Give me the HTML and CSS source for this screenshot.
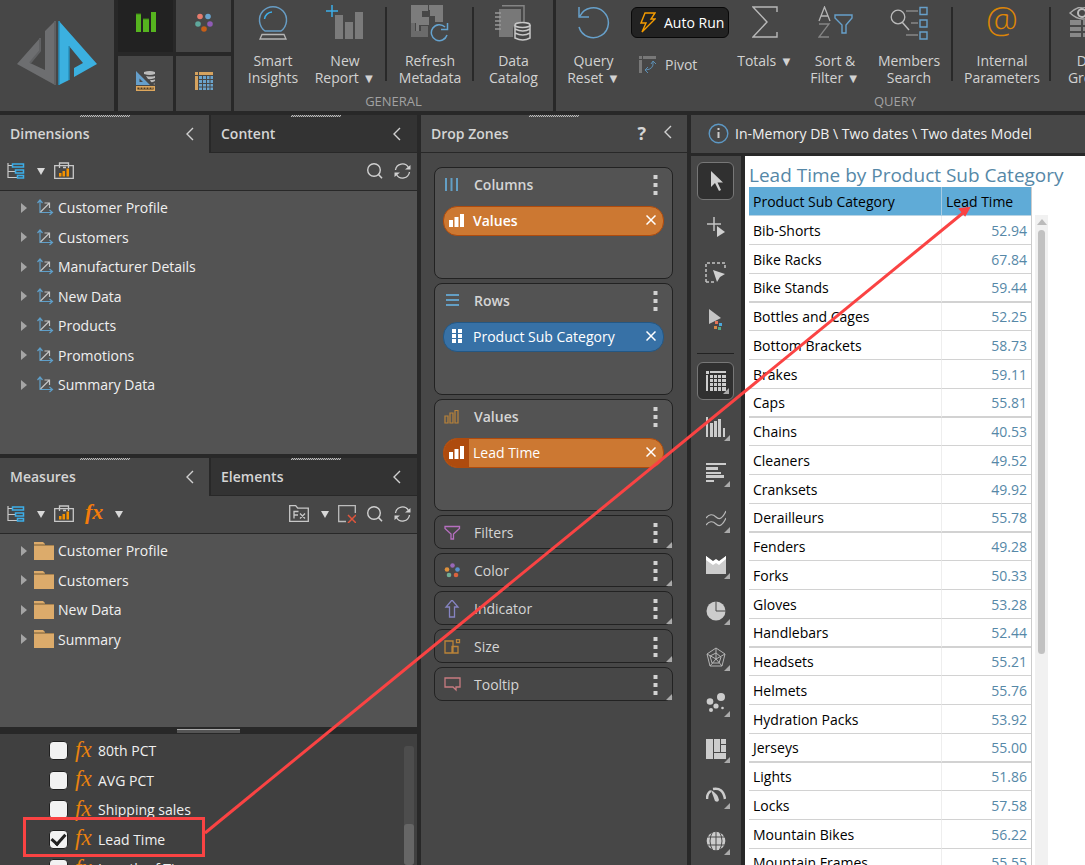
FILE: index.html
```html
<!DOCTYPE html>
<html lang="en">
<head>
    <meta charset="UTF-8">
    <meta name="viewport" content="width=device-width, initial-scale=1.0">
    <title>Two dates Model</title>
    <link rel="stylesheet" href="styles.css">
</head>
<body>
    <!-- shared icons -->
    <svg class="sprite" aria-hidden="true">
        <symbol id="chevron" viewBox="0 0 8 14"><path d="M7 1 1 7l6 6" fill="none" stroke="#d0d0d0" stroke-width="1.4"/></symbol>
        <symbol id="expand" viewBox="0 0 6 10"><path d="M0 0l6 5-6 5z" fill="#a5a5a5"/></symbol>
        <symbol id="caret" viewBox="0 0 8 7"><path d="M0 0h8L4 7z" fill="#d8d8d8"/></symbol>
        <symbol id="axes" viewBox="0 0 17 17"><path d="M3 1v12.500h12M.5 4 3 1l2.500 3M12.500 11l3 2.500-3 2.500" fill="none" stroke="#5f9fc9" stroke-width="1.200"/><path d="M3.500 13 12.500 4M7.500 4h5v5" fill="none" stroke="#c4c4c4" stroke-width="1.200"/></symbol>
        <symbol id="folder" viewBox="0 0 20 18"><path d="M0 0h9l2 2H0zM0 3h20v15H0z" fill="#dcab6b"/><path d="M0 2.500h11M0 3.500h20" stroke="#a88350"/></symbol>
        <symbol id="tree" viewBox="0 0 18 16"><path d="M1 0v14.500h9M1 2.500h5M1 8.500h7" fill="none" stroke="#c8c8c8" stroke-width="1.200"/><path d="M5.500 1h11v3h-11zM8.500 7h8v3h-8zM10.500 12.500h6v2.500h-6z" fill="none" stroke="#3daee9" stroke-width="1.500"/></symbol>
        <symbol id="case" viewBox="0 0 20 17"><path d="M.7 3.700h18.600v12.600H.7zM5.500 6V1h9v5M9 5.500h3" fill="none" stroke="#c8c8c8" stroke-width="1.300"/><path d="M5 11h2.500v3.500H5zM8.500 9H11v5.500H8.500zM12.500 6.500H15v8h-2.500z" fill="#f39200"/></symbol>
        <symbol id="search" viewBox="0 0 16 16"><circle cx="7" cy="7" r="6.300" fill="none" stroke="#d0d0d0" stroke-width="1.400"/><path d="M11.500 11.500 15 15.300" stroke="#d0d0d0" stroke-width="1.600"/></symbol>
        <symbol id="sync" viewBox="0 0 17 16"><path d="M1.500 7A7 7 0 0 1 14.500 4.500M15.500 9A7 7 0 0 1 2.500 11.500" fill="none" stroke="#d0d0d0" stroke-width="1.300"/><path d="M11 6.500h5.500V2zM6 9.500H.5V14z" fill="#d0d0d0"/></symbol>
        <symbol id="bars" viewBox="0 0 15 13"><path d="M0 6h4v7H0zM5.500 3h4v10h-4zM11 0h4v13h-4z" fill="#fff"/></symbol>
        <symbol id="cross" viewBox="0 0 10 10"><path d="m0.500.5 9 9m0-9-9 9" stroke="#fff" stroke-width="1.500"/></symbol>
        <symbol id="dots" viewBox="0 0 5 20"><path d="M.5 0h4v4h-4zM.5 8h4v4h-4zM.5 16h4v4h-4z" fill="#d2d2d2"/></symbol>
    </svg>

    <header class="ribbon">
        <div class="logo">
            <svg width="80" height="65" viewBox="0 0 80 65"><path d="M38 0v64L0 43 23 17v13L13 42l15 7V10z" fill="#6d6e70"/><path d="M38 0v64M23 17v13L13 42" fill="none" stroke="#606163" stroke-width="2"/><path d="M42 0v64l10-5V25l14 17-9 5v9l23-13z" fill="#3bb0e0"/><path d="M52 59V25M42 0v64" stroke="#2790bd" stroke-width="1.500"/></svg>
        </div>
        <nav class="modules">
            <button class="active" aria-label="Discover"><svg width="20" height="20"><path d="M0 2h5v18H0zM7 7h6v13H7zM15 0h5v20h-5z" fill="#56b41f"/><path d="M0 2h5M7 7h6" stroke="#3d8512"/></svg></button>
            <button aria-label="Present"><svg width="18" height="19"><circle cx="5" cy="3.500" r="2.800" fill="#e77b6c"/><circle cx="13" cy="3.500" r="2.800" fill="#69a3cc"/><circle cx="3" cy="11" r="2.800" fill="#5fa79c"/><circle cx="15" cy="11" r="2.800" fill="#8f5bb5"/><circle cx="9" cy="16" r="2.800" fill="#c65f17"/></svg></button>
            <button aria-label="Model"><svg width="20" height="20"><path d="M0 0l14 14H0zM3.500 7.500v3.500H7z" fill="#659fcb" fill-rule="evenodd"/><path d="M8 1q6-2 11 0v2q-5 2-11 0zM10 5q5 1 9 0v2q-3 1.500-7 1zM14 9q3 0 5-.500V10q-2 1.500-4 1zM17 13l2-.500v1z" fill="#bbb"/><path d="M.7 15.700h17.600v3.600H.7z" fill="#4b3a25" stroke="#dda75d" stroke-width="1.400"/><path d="M4 15v3m3-3v3m3-3v3m3-3v3m3-3v3" stroke="#dda75d"/></svg></button>
            <button aria-label="Formulate"><svg width="18" height="18"><path d="M0 0h3v3H0zM4 0h14v3H4zM0 4h3v14H0z" fill="#d6a35e"/><path d="M4 4h14v14H4z" fill="#6aa3cc"/><path d="M7.500 4v14M11.500 4v14M15 4v14M4 7.500h14M4 11.500h14M4 15h14" stroke="#474747"/></svg></button>
        </nav>
        <section class="group general">
            <div class="items">
                <button class="item smart"><span class="pic"><svg width="30" height="36"><path d="M7 26a13.500 13.500 0 1 1 16 0z" fill="none" stroke="#679dc5" stroke-width="1.500"/><path d="M6.500 14A8 8 0 0 1 14 7" fill="none" stroke="#3daee9" stroke-width="1.500"/><path d="M4 29.500h22l2 4.500H2z" fill="none" stroke="#b5b5b5" stroke-width="1.300"/></svg></span>Smart<br>Insights</button>
                <button class="item report"><span class="pic"><svg width="38" height="36"><path d="M9 10h8v24H9zM19 17h8v17h-8zM29 7h8v27h-8z" fill="#7b7b7b"/><path d="M0 6h12M6 0v12" stroke="#3daee9" stroke-width="1.500"/></svg></span>New<br>Report <small>▼</small></button>
                <button class="item refresh"><span class="pic"><svg width="38" height="37"><path d="M0 0h17v6h-6v6h7v8H8v6H5v-8H0zM18 0h14v17h-8v-6h-5V5h-1z" fill="#7c7c7c"/><path d="M0 18h4v8h6v-5h7v11H0z" fill="#6b6b6b"/><path d="M34 22a8 8 0 1 0 2 8M36.500 18v6.500H30" fill="none" stroke="#65a3cf" stroke-width="1.500"/></svg></span>Refresh<br>Metadata</button>
                <button class="item"><span class="pic"><svg width="37" height="36"><path d="M7 .7h22V17" fill="none" stroke="#848484" stroke-width="1.500"/><path d="M4 4h22v15q-8 0-8 5v8H4z" fill="#787878"/><path d="M0 8h6M0 12h6M0 16h6M0 20h6M0 24h6" stroke="#999" stroke-width="1.500"/><path d="M20 20v13q8 4 15 0V20M20 24q8 4 15 0M20 28q8 4 15 0" fill="none" stroke="#c8c8c8" stroke-width="1.500"/><ellipse cx="27.500" cy="20" rx="7.500" ry="2.500" fill="#474747" stroke="#c8c8c8" stroke-width="1.500"/></svg></span>Data<br>Catalog</button>
            </div>
            <h2>GENERAL</h2>
        </section>
        <section class="group query">
            <div class="items">
                <button class="item reset"><span class="pic"><svg width="34" height="34"><path d="M3 10a15 15 0 1 1-1 11M2 1v10h10" fill="none" stroke="#67a0ca" stroke-width="1.500"/></svg></span>Query<br>Reset <small>▼</small></button>
                <div class="runs">
                    <button class="run"><svg width="16" height="21"><path d="M5 1h10l-4 6h4L2 20l4-9H1z" fill="none" stroke="#f59c00" stroke-width="1.400"/></svg>Auto Run</button>
                    <button class="pivot"><svg width="18" height="18"><path d="M0 0h3v3H0zM4 0h13v3H4zM0 4h3v13H0z" fill="#787878"/><path d="M7 14q8-1 7-8M12 8l2-3 3 3M9 11l-3 3 3 3" fill="none" stroke="#5d8fb4"/></svg>Pivot</button>
                </div>
                <button class="item totals"><span class="pic"><svg width="26" height="34"><path d="M25 6V1H1l14 15L1 31h24v-5" fill="none" stroke="#b8b8b8" stroke-width="1.400"/></svg></span>Totals <small>▼</small></button>
                <button class="item sort"><span class="pic"><svg width="35" height="34"><path d="M1 15 6.500 1 12 15M3 10h7" fill="none" stroke="#b5b5b5" stroke-width="1.300"/><path d="M1 18h10L1 31h10" fill="none" stroke="#858585" stroke-width="1.300"/><path d="M17 9h17v3l-6 7v8h-4v-8l-7-7z" fill="none" stroke="#67a0ca" stroke-width="1.400"/></svg></span>Sort &amp;<br>Filter <small>▼</small></button>
                <button class="item members"><span class="pic"><svg width="38" height="34"><circle cx="8" cy="11" r="6.800" fill="none" stroke="#bbb" stroke-width="1.300"/><path d="m12 16 7 8" stroke="#bbb" stroke-width="1.500"/><path d="M16 5h12M21 17h7M16 29h12" stroke="#888" stroke-width="1.300"/><path d="M30 1.500h7v7h-7zM30 14h7v7h-7zM30 26h7v7h-7z" fill="none" stroke="#67a0ca" stroke-width="1.400"/></svg></span>Members<br>Search</button>
                <button class="item params"><span class="pic at">@</span>Internal<br>Parameters</button>
                <button class="item groups"><span class="pic"><svg width="46" height="32"><path d="M1 6q13-12 25 0-12 12-25 0z" fill="none" stroke="#aaa" stroke-width="1.500"/><circle cx="13" cy="6" r="4" fill="none" stroke="#bbb" stroke-width="2"/><path d="M1 13h11v5H1zM14 13h11v5H14zM1 20h11v4H1zM14 20h11v4H14zM1 26h11v4H1zM14 26h11v4H14z" fill="#888"/></svg></span>Data<br>Groups</button>
            </div>
            <h2>QUERY</h2>
        </section>
    </header>

    <main class="workspace">
        <aside class="sources">
            <section class="panel dimensions">
                <div class="tabs">
                    <button class="tab grip current">Dimensions <svg width="8" height="14"><use href="#chevron"/></svg></button>
                    <button class="tab grip">Content <svg width="8" height="14"><use href="#chevron"/></svg></button>
                </div>
                <div class="tools">
                    <button aria-label="Tree view"><svg width="18" height="16"><use href="#tree"/></svg></button>
                    <button class="more" aria-label="Tree options"><svg width="8" height="7"><use href="#caret"/></svg></button>
                    <button aria-label="Folders"><svg width="20" height="17"><use href="#case"/></svg></button>
                    <span class="space"></span>
                    <button aria-label="Search"><svg width="16" height="16"><use href="#search"/></svg></button>
                    <button aria-label="Refresh"><svg width="17" height="16"><use href="#sync"/></svg></button>
                </div>
                <ul class="tree">
                    <li><svg class="arrow"><use href="#expand"/></svg><svg class="axes"><use href="#axes"/></svg>Customer Profile</li>
                    <li><svg class="arrow"><use href="#expand"/></svg><svg class="axes"><use href="#axes"/></svg>Customers</li>
                    <li><svg class="arrow"><use href="#expand"/></svg><svg class="axes"><use href="#axes"/></svg>Manufacturer Details</li>
                    <li><svg class="arrow"><use href="#expand"/></svg><svg class="axes"><use href="#axes"/></svg>New Data</li>
                    <li><svg class="arrow"><use href="#expand"/></svg><svg class="axes"><use href="#axes"/></svg>Products</li>
                    <li><svg class="arrow"><use href="#expand"/></svg><svg class="axes"><use href="#axes"/></svg>Promotions</li>
                    <li><svg class="arrow"><use href="#expand"/></svg><svg class="axes"><use href="#axes"/></svg>Summary Data</li>
                </ul>
            </section>
            <section class="panel measures">
                <div class="tabs">
                    <button class="tab grip current">Measures <svg width="8" height="14"><use href="#chevron"/></svg></button>
                    <button class="tab grip">Elements <svg width="8" height="14"><use href="#chevron"/></svg></button>
                </div>
                <div class="tools">
                    <button aria-label="Tree view"><svg width="18" height="16"><use href="#tree"/></svg></button>
                    <button class="more" aria-label="Tree options"><svg width="8" height="7"><use href="#caret"/></svg></button>
                    <button aria-label="Folders"><svg width="20" height="17"><use href="#case"/></svg></button>
                    <button class="fx">fx</button>
                    <button class="more" aria-label="Formula options"><svg width="8" height="7"><use href="#caret"/></svg></button>
                    <span class="space"></span>
                    <button aria-label="Formula folder"><svg width="20" height="17"><path d="M.7 16.300V.7h6l2 2.500h10.600v13.100zM5 13.500V6.500h4.500M5 10h4M11 8.500l5 5m0-5-5 5" fill="none" stroke="#c8c8c8" stroke-width="1.300"/></svg></button>
                    <button class="more" aria-label="Folder options"><svg width="8" height="7"><use href="#caret"/></svg></button>
                    <button aria-label="Clear selection"><svg width="18" height="18"><path d="M8 16.500H.7V.7h16.600V8" fill="none" stroke="#bdbdbd" stroke-width="1.300"/><path d="m10 10 8 8m0-8-8 8" stroke="#e0553c" stroke-width="1.500"/></svg></button>
                    <button aria-label="Search"><svg width="16" height="16"><use href="#search"/></svg></button>
                    <button aria-label="Refresh"><svg width="17" height="16"><use href="#sync"/></svg></button>
                </div>
                <ul class="tree">
                    <li><svg class="arrow"><use href="#expand"/></svg><svg class="folder"><use href="#folder"/></svg>Customer Profile</li>
                    <li><svg class="arrow"><use href="#expand"/></svg><svg class="folder"><use href="#folder"/></svg>Customers</li>
                    <li><svg class="arrow"><use href="#expand"/></svg><svg class="folder"><use href="#folder"/></svg>New Data</li>
                    <li><svg class="arrow"><use href="#expand"/></svg><svg class="folder"><use href="#folder"/></svg>Summary</li>
                </ul>
            </section>
            <div class="splitter"></div>
            <section class="checks">
                <div class="check-list">
                    <label><input type="checkbox"><i>fx</i>80th PCT</label>
                    <label><input type="checkbox"><i>fx</i>AVG PCT</label>
                    <label><input type="checkbox"><i>fx</i>Shipping sales</label>
                    <label><input type="checkbox" checked><i>fx</i>Lead Time</label>
                    <label><input type="checkbox"><i>fx</i>Length of Time</label>
                </div>
                <div class="side-scroll"><span></span></div>
            </section>
        </aside>

        <section class="zones">
            <div class="zones-head grip">
                <h3>Drop Zones</h3>
                <button class="help">?</button>
                <button aria-label="Collapse"><svg width="8" height="14"><use href="#chevron"/></svg></button>
            </div>
            <div class="zone-list">
                <div class="zone open">
                    <div class="zone-title"><svg width="15" height="15"><path d="M2 1v13M7.500 1v13M13 1v13" stroke="#639fc5" stroke-width="2"/></svg>Columns<button class="menu" aria-label="Columns menu"><svg width="5" height="20"><use href="#dots"/></svg></button></div>
                    <div class="pill orange"><span class="lead"><svg width="15" height="13"><use href="#bars"/></svg></span><b>Values</b><button aria-label="Remove Values"><svg width="10" height="10"><use href="#cross"/></svg></button></div>
                </div>
                <div class="zone open">
                    <div class="zone-title"><svg width="15" height="15"><path d="M2 2h13M2 7h13M2 12h13" stroke="#639fc5" stroke-width="2"/></svg>Rows<button class="menu" aria-label="Rows menu"><svg width="5" height="20"><use href="#dots"/></svg></button></div>
                    <div class="pill blue"><span class="lead"><svg width="12" height="14"><path d="M1 0h4v4H1zM7 0h4v4H7zM1 5h4v4H1zM7 5h4v4H7zM1 10h4v4H1zM7 10h4v4H7z" fill="#fff"/></svg></span>Product Sub Category<button aria-label="Remove Product Sub Category"><svg width="10" height="10"><use href="#cross"/></svg></button></div>
                </div>
                <div class="zone open">
                    <div class="zone-title"><svg width="15" height="15"><path d="M1 7h3v7H1zM6 4h3v10H6zM11 1.500h3V14h-3z" fill="none" stroke="#bb8439" stroke-width="1.200"/></svg>Values<button class="menu" aria-label="Values menu"><svg width="5" height="20"><use href="#dots"/></svg></button></div>
                    <div class="pill orange measure"><span class="lead"><svg width="15" height="13"><use href="#bars"/></svg></span>Lead Time<button aria-label="Remove Lead Time"><svg width="10" height="10"><use href="#cross"/></svg></button></div>
                </div>
                <div class="zone">
                    <div class="zone-title"><svg width="17" height="16"><path d="M1 1.500h14.500v2L9.500 9v5H7V9L1 3.500z" fill="none" stroke="#b66fc0" stroke-width="1.300"/></svg>Filters<button class="menu" aria-label="Filters menu"><svg width="5" height="20"><use href="#dots"/></svg></button></div>
                </div>
                <div class="zone">
                    <div class="zone-title"><svg width="17" height="16"><circle cx="8.500" cy="2.500" r="2.300" fill="#9968b8"/><circle cx="3" cy="6.500" r="2.300" fill="#df913c"/><circle cx="13.500" cy="6.500" r="2.300" fill="#5790cc"/><circle cx="5" cy="12" r="2.300" fill="#71ad95"/><circle cx="12" cy="12" r="2.300" fill="#da633e"/></svg>Color<button class="menu" aria-label="Color menu"><svg width="5" height="20"><use href="#dots"/></svg></button></div>
                </div>
                <div class="zone">
                    <div class="zone-title"><svg width="17" height="18"><path d="m8 0 6 7h-3.500v10h-5V7H2z" fill="none" stroke="#8684c2" stroke-width="1.300"/></svg>Indicator<button class="menu" aria-label="Indicator menu"><svg width="5" height="20"><use href="#dots"/></svg></button></div>
                </div>
                <div class="zone">
                    <div class="zone-title"><svg width="17" height="16"><path d="M1 2h8v12H1zM8 7.500h6v6.500H8zM12.500.700h3v3h-3z" fill="none" stroke="#bb8439" stroke-width="1.300"/></svg>Size<button class="menu" aria-label="Size menu"><svg width="5" height="20"><use href="#dots"/></svg></button></div>
                </div>
                <div class="zone">
                    <div class="zone-title"><svg width="17" height="16"><path d="M1 1h15v9h-4v3L9 10H1z" fill="none" stroke="#c77b80" stroke-width="1.300"/></svg>Tooltip<button class="menu" aria-label="Tooltip menu"><svg width="5" height="20"><use href="#dots"/></svg></button></div>
                </div>
            </div>
        </section>

        <section class="report-area">
            <div class="path"><svg width="21" height="21"><circle cx="10.500" cy="10.500" r="9.300" fill="none" stroke="#5d98c4" stroke-width="1.400"/><path d="M9.500 5h2v2h-2zM9.500 9h2v6h-2z" fill="#ccc"/></svg>In-Memory DB \ Two dates \ Two dates Model</div>
            <div class="stage">
                <nav class="chart-tools">
                    <button class="on" aria-label="Select"><svg width="20" height="22"><path d="M5 1v16l4-4 4 8 2-1-3.500-7.500H17z" fill="#d0d0d0"/></svg></button>
                    <button aria-label="Add point"><svg width="20" height="20"><path d="M1 7h14M8 0v14" stroke="#c4c4c4" stroke-width="1.500"/><path d="M11 9v11l8-5z" fill="#d0d0d0"/></svg></button>
                    <button aria-label="Lasso"><svg width="22" height="22"><path d="M1 20V1h19v6M1 20h8" fill="none" stroke="#c4c4c4" stroke-width="1.500" stroke-dasharray="3 2"/><path d="M8 8v0l12 4-5 3-3 5z" fill="#d0d0d0"/></svg></button>
                    <button aria-label="Highlight"><svg width="20" height="22"><path d="M3 1v15l12-6z" fill="#c4c4c4"/><path d="M9 13h3v3H9z" fill="#e37358"/><path d="M13 15h3v3h-3z" fill="#4ba8dc"/><path d="M8 18h3v3H8z" fill="#d78a45"/><path d="M12 19h3v3h-3z" fill="#55a985"/></svg></button>
                    <hr>
                    <button class="on corner" aria-label="Grid"><svg width="20" height="20"><path d="M0 0h3v3H0zM4 0h16v2H4zM0 4h2v16H0z" fill="#ccc"/><path d="M4 4h16v16H4z" fill="#ccc"/><path d="M7.500 4v16M11.500 4v16M15.500 4v16M4 7.500h16M4 11.500h16M4 15.500h16" stroke="#303030"/></svg></button>
                    <button class="corner" aria-label="Column chart"><svg width="20" height="20"><path d="M0 0h2v20H0zM4 6h3v14H4zM8 4h3v16H8zM12 2h3v18h-3zM17 11h2v9h-2z" fill="#ccc"/></svg></button>
                    <button class="corner" aria-label="Bar chart"><svg width="20" height="20"><path d="M0 0h20v2H0zM0 4h12v3H0zM0 9h15v2H0zM0 12h18v3H0zM0 17h8v2H0z" fill="#ccc"/></svg></button>
                    <button class="corner" aria-label="Line chart"><svg width="20" height="18"><path d="M0 8Q5 2 10 7t10-6M0 15q5-6 10-1t10-6" fill="none" stroke="#b9b9b9" stroke-width="1.200"/></svg></button>
                    <button class="corner" aria-label="Area chart"><svg width="20" height="18"><path d="m0 0 7 6 3-2 3 2 7-6v18H0z" fill="#ccc"/><path d="m0 0 7 5 3-2 3 2 7-5v3l-7 6-3-2-3 2-7-5z" fill="#fff"/></svg></button>
                    <button class="corner" aria-label="Pie chart"><svg width="20" height="20"><circle cx="10" cy="10" r="9.500" fill="#ccc"/><path d="M10 0v10h10" fill="none" stroke="#474747"/></svg></button>
                    <button class="corner" aria-label="Radar chart"><svg width="20" height="21"><path d="m10 1 9 6-3 12H4L1 7zM10 6l5 4-2 6H6l-2-7zM10 1v11M1 7l9 5 9-5M4 19l6-7 6 7" fill="none" stroke="#b4b4b4"/></svg></button>
                    <button class="corner" aria-label="Scatter chart"><svg width="20" height="20"><g fill="#ccc"><circle cx="4" cy="8.500" r="3.300"/><circle cx="15" cy="4" r="4"/><circle cx="10" cy="13" r="2.600"/><circle cx="5" cy="17" r="2"/><circle cx="16.500" cy="15" r="1.300"/></g></svg></button>
                    <button class="corner" aria-label="Treemap"><svg width="20" height="20"><path d="M0 0h7v20H0zM8 0h6v13H8zM15 0h5v5h-5zM15 6h5v7h-5zM8 14h12v6H8z" fill="#ccc"/></svg></button>
                    <button class="corner" aria-label="Gauge"><svg width="20" height="18"><path d="M1 13Q1 7 5 5M7 3q10-2 12 10" fill="none" stroke="#ccc" stroke-width="2.500"/><path d="M5 4q7 4 8 10-1 3-4 1z" fill="#ccc"/></svg></button>
                    <button class="corner" aria-label="Map"><svg width="20" height="20"><circle cx="10" cy="10" r="9.300" fill="#ccc"/><path d="M0 6h20M0 14h20M7 0q-6 10 0 20M13 0q6 10 0 20M10 0v20" fill="none" stroke="#4b4b4b"/></svg></button>
                </nav>
                <div class="canvas">
                    <h1>Lead Time by Product Sub Category</h1>
                    <div class="grid-wrap">
                        <table>
                            <thead><tr><th>Product Sub Category</th><th>Lead Time</th></tr></thead>
                            <tbody>
                                <tr><td>Bib-Shorts</td><td>52.94</td></tr>
                                <tr><td>Bike Racks</td><td>67.84</td></tr>
                                <tr><td>Bike Stands</td><td>59.44</td></tr>
                                <tr><td>Bottles and Cages</td><td>52.25</td></tr>
                                <tr><td>Bottom Brackets</td><td>58.73</td></tr>
                                <tr><td>Brakes</td><td>59.11</td></tr>
                                <tr><td>Caps</td><td>55.81</td></tr>
                                <tr><td>Chains</td><td>40.53</td></tr>
                                <tr><td>Cleaners</td><td>49.52</td></tr>
                                <tr><td>Cranksets</td><td>49.92</td></tr>
                                <tr><td>Derailleurs</td><td>55.78</td></tr>
                                <tr><td>Fenders</td><td>49.28</td></tr>
                                <tr><td>Forks</td><td>50.33</td></tr>
                                <tr><td>Gloves</td><td>53.28</td></tr>
                                <tr><td>Handlebars</td><td>52.44</td></tr>
                                <tr><td>Headsets</td><td>55.21</td></tr>
                                <tr><td>Helmets</td><td>55.76</td></tr>
                                <tr><td>Hydration Packs</td><td>53.92</td></tr>
                                <tr><td>Jerseys</td><td>55.00</td></tr>
                                <tr><td>Lights</td><td>51.86</td></tr>
                                <tr><td>Locks</td><td>57.58</td></tr>
                                <tr><td>Mountain Bikes</td><td>56.22</td></tr>
                                <tr><td>Mountain Frames</td><td>55.55</td></tr>
                            </tbody>
                        </table>
                        <div class="grid-scroll"><span></span></div>
                    </div>
                </div>
            </div>
        </section>
    </main>

    <!-- callout over the workspace -->
    <svg class="callout" width="1085" height="865" aria-hidden="true">
        <rect x="24.500" y="818.500" width="179" height="37" fill="none" stroke="#fa4343" stroke-width="3"/>
        <path d="M205 833 963 213" stroke="#fa4343" stroke-width="3"/>
        <path d="m969 208-4 7-5-6z" fill="#fa4343" stroke="#fa4343" stroke-width="2"/>
    </svg>
</body>
</html>
```

FILE: styles.css
```css
* {
    box-sizing: border-box;
}
body {
    margin: 0;
    height: 100vh;
    display: flex;
    flex-direction: column;
    gap: 4px;
    overflow: hidden;
    position: relative;
    background: #282828;
    color: #f0f0f0;
    font-family: "Open Sans", "Noto Sans", sans-serif;
    font-size: 14px;
    line-height: 17px;
}
button {
    padding: 0;
    border: none;
    background: none;
    color: inherit;
    font: inherit;
    cursor: pointer;
}
h1, h2, h3, ul {
    margin: 0;
    padding: 0;
}
svg {
    flex: none;
}
.sprite {
    display: none;
}

/* Ribbon */
.ribbon {
    display: flex;
    gap: 3px;
    flex: none;
    height: 111px;
    overflow: hidden;
}
.logo {
    width: 114px;
    flex: none;
    margin-right: 1px;
    padding: 21px 17px;
    background: #474747;
}
.modules {
    display: grid;
    grid-template-columns: 55px 55px;
    grid-template-rows: 52px 55px;
    gap: 4px 3px;
    flex: none;
}
.modules button {
    display: flex;
    align-items: center;
    justify-content: center;
    background: #474747;
}
.modules .active {
    background: #222;
}
.modules button:nth-child(-n+2) {
    padding-bottom: 8px;
}
.modules button:nth-child(n+3) {
    padding-bottom: 6px;
}
.group {
    flex: none;
    background: #474747;
    color: #d2d2d2;
}
.general {
    width: 319px;
}
.query {
    width: 678px;
}
.items {
    display: flex;
    height: 93px;
}
.item {
    display: block;
    flex: 1;
    align-self: flex-start;
}
.item small {
    font-size: 13px;
    line-height: 14px;
}
.item .pic {
    display: flex;
    align-items: center;
    justify-content: center;
    height: 52px;
    padding-bottom: 6px;
}
.group h2 {
    color: #a2a2a2;
    font-size: 13px;
    font-weight: 400;
    text-align: center;
}
.smart {
    flex: 0 0 78px;
}
.report {
    flex: 0 0 66px;
    margin-right: 8px;
}
.report, .refresh, .members, .params {
    position: relative;
}
.refresh {
    flex: 0 0 88px;
}
.report::after, .refresh::after, .members::after, .params::after {
    content: "";
    position: absolute;
    top: 7px;
    right: 0;
    width: 2px;
    height: 74px;
    background: #292929;
}
.report::after {
    right: -9px;
}
.reset {
    flex: 0 0 75px;
}
.runs {
    flex: 0 0 98px;
    padding-top: 7px;
}
.run, .pivot {
    display: flex;
    align-items: center;
    width: 100%;
    gap: 8px;
    padding-left: 8px;
}
.run {
    height: 31px;
    border: 1px solid #080808;
    border-radius: 6px;
    background: #222;
    color: #fff;
}
.pivot {
    height: 54px;
    padding-bottom: 1px;
}
.totals {
    flex: 0 0 72px;
}
.sort {
    flex: 0 0 68px;
}
.members {
    flex: 0 0 84px;
    padding-right: 4px;
}
.params {
    flex: 0 0 98px;
}
.groups {
    flex: 0 0 82px;
}
.item .at {
    color: #dc8508;
    font-size: 36px;
    font-weight: 300;
    line-height: 40px;
    padding-bottom: 12px;
}

/* Workspace */
.workspace {
    display: grid;
    grid-template-columns: 417px 266px minmax(0, 1fr);
    gap: 4px;
    flex: 1;
    min-height: 0;
}
.sources {
    display: flex;
    flex-direction: column;
    min-height: 0;
}
.panel {
    background: #535353;
}
.dimensions {
    height: 339px;
    margin-bottom: 4px;
}
.measures {
    flex: 0 0 269px;
}
.tabs {
    display: grid;
    grid-template-columns: 209px 1fr;
    height: 38px;
    background: #474747;
}
.tab {
    display: flex;
    align-items: center;
    justify-content: space-between;
    padding: 0 16px 0 10px;
    border-left: 2px solid #282828;
    border-bottom: 1px solid #282828;
    background: #333;
    color: #d5d5d5;
    font-weight: 600;
}
.tab.current {
    padding-right: 15px;
    border-color: #474747;
    border-left: none;
    background: #474747;
}
.grip {
    position: relative;
}
.grip::before {
    content: "";
    position: absolute;
    top: 0;
    left: 80px;
    width: 50px;
    height: 2px;
    background: repeating-conic-gradient(#bbb 0 25%, #555 0 50%) 0 0 / 2px 2px;
}
.zones-head.grip::before {
    left: 108px;
}
.tools {
    display: flex;
    align-items: center;
    gap: 11px;
    height: 38px;
    padding: 0 6px 2px 7px;
    border-bottom: 1px solid #282828;
    background: #474747;
}
.tools button {
    display: flex;
}
.tools .more {
    padding-top: 2px;
    margin-left: 1px;
}
.tools .more + button {
    margin-left: -2px;
}
.tools svg {
    display: block;
}
.space {
    flex: 1;
}
.fx {
    color: #f47c0b;
    font-family: "Liberation Serif", serif;
    font-size: 22px;
    font-style: italic;
    font-weight: 700;
    line-height: 14px;
    padding-bottom: 3px;
}
.tree {
    padding-top: 2px;
    list-style: none;
}
.tree li {
    display: flex;
    align-items: center;
    height: 29px;
    padding-left: 21px;
}
.tree li:nth-child(even) {
    height: 30px;
}
.arrow {
    width: 6px;
    height: 10px;
}
.axes {
    width: 17px;
    height: 17px;
    margin: 0 4px 0 10px;
}
.folder {
    width: 20px;
    height: 18px;
    margin: 0 4px 0 7px;
}
.splitter {
    flex: 0 0 7px;
    display: flex;
    justify-content: center;
    align-items: center;
}
.splitter::before {
    content: "";
    width: 63px;
    height: 3px;
    border-top: 1px solid #aaa;
    background: #555;
}
.checks {
    display: flex;
    justify-content: space-between;
    flex: 1;
    min-height: 0;
    overflow: hidden;
    background: #404040;
}
.check-list {
    padding: 2px 0 0 49px;
}
.check-list label {
    display: flex;
    align-items: center;
    height: 29px;
}
.check-list label:nth-child(even) {
    height: 30px;
}
.check-list input {
    display: grid;
    place-items: center;
    width: 19px;
    height: 19px;
    margin: 0 7px 0 0;
    appearance: none;
    border: 1px solid #202020;
    border-radius: 4px;
    background: #f2f2f2;
}
.check-list input:checked::before {
    content: "";
    width: 6px;
    height: 11px;
    margin-bottom: 3px;
    border: solid #222;
    border-width: 0 3px 3px 0;
    rotate: 42deg;
}
.check-list i {
    width: 23px;
    padding-bottom: 3px;
    color: #e9820f;
    font-family: "Liberation Serif", serif;
    font-size: 23px;
}
.side-scroll {
    width: 10px;
    margin: 12px 3px 0 0;
    padding-top: 78px;
    border-radius: 3px;
    background: #4d4d4d;
}
.side-scroll span {
    display: block;
    height: 100%;
    border-radius: 3px;
    background: #666;
}

/* Drop zones */
.zones {
    background: #474747;
}
.zones-head {
    display: flex;
    align-items: center;
    height: 38px;
    padding: 0 15px 0 10px;
    border-bottom: 1px solid #282828;
    color: #d5d5d5;
}
.zones-head h3 {
    flex: 1;
    font-size: 14px;
    font-weight: 600;
}
.help {
    margin-right: 18px;
    font-size: 18px;
    font-weight: 700;
}
.zone-list {
    display: grid;
    gap: 4px;
    padding: 14px 14px 0 13px;
}
.zone {
    position: relative;
    height: 34px;
    border: 1px solid #222;
    border-radius: 8px;
    color: #d5d5d5;
}
.zone::after {
    content: "";
    position: absolute;
    right: 0;
    bottom: 0;
    border-left: 6px solid transparent;
    border-bottom: 6px solid #aaa;
}
.zone.open {
    height: 112px;
    background: #535353;
}
.zone.open::after {
    display: none;
}
.zone-title {
    display: grid;
    grid-template-columns: 30px 1fr 5px;
    align-items: center;
    height: 33px;
    padding: 0 14px 0 9px;
}
.open .zone-title {
    font-weight: 600;
}
.menu {
    display: flex;
}
.pill {
    display: flex;
    align-items: center;
    height: 30px;
    margin: 5px 8px 0;
    padding: 0 7px 2px 0;
    overflow: hidden;
    border: 1px solid #ae4b0e;
    border-radius: 14px;
    background: #cc7832;
    color: #fff;
}
.pill b {
    font-weight: 600;
}
.pill .lead {
    display: flex;
    align-items: center;
    justify-content: center;
    width: 25px;
    height: 30px;
    margin-right: 4px;
}
.pill.measure .lead {
    background: #ae4b0e;
}
.pill button {
    display: flex;
    margin-left: auto;
}
.pill.blue {
    border-color: #245783;
    background: #3771a6;
}

/* Report */
.report-area {
    display: flex;
    flex-direction: column;
    gap: 3px;
    min-width: 0;
    min-height: 0;
}
.path {
    display: flex;
    align-items: center;
    gap: 6px;
    flex: none;
    height: 38px;
    padding: 0 0 2px 17px;
    background: #474747;
}
.stage {
    display: flex;
    gap: 4px;
    flex: 1;
    min-height: 0;
}
.chart-tools {
    display: flex;
    flex-direction: column;
    align-items: center;
    gap: 8px;
    flex: none;
    width: 50px;
    padding: 6px 1px 0 0;
    overflow: hidden;
    background: #474747;
}
.chart-tools button {
    position: relative;
    display: flex;
    align-items: center;
    justify-content: center;
    flex: none;
    width: 37px;
    height: 38px;
    border-radius: 6px;
}
.chart-tools .on {
    border: 1px solid #777;
    background: #303030;
}
.chart-tools hr {
    flex: none;
    width: 37px;
    height: 1px;
    margin: 7px 0 0;
    border: none;
    background: #222;
}
.corner::after {
    content: "";
    position: absolute;
    right: 4px;
    bottom: 5px;
    border-left: 6px solid transparent;
    border-bottom: 6px solid #aaa;
}
.canvas {
    flex: 1;
    min-width: 0;
    padding: 5px 0 0 4px;
    overflow: hidden;
    background: #fff;
    color: #000;
}
.canvas h1 {
    height: 26px;
    color: #5688a7;
    font-size: 19px;
    font-weight: 400;
    line-height: 28px;
    white-space: nowrap;
}
.grid-wrap {
    display: flex;
    gap: 3px;
}
table {
    width: 283px;
    table-layout: fixed;
    border-collapse: separate;
    border-spacing: 0;
    border-right: 1px solid #ccc;
}
th, td {
    height: 29px;
    padding: 0 4px;
    border-bottom: 1px solid #d2d2d2;
    text-align: left;
}
th {
    border-color: #b7d3e4;
    background: #5fabd7;
    font-weight: 400;
}
th:first-child {
    width: 193px;
    border-right: 1px solid #a7cce3;
}
td:first-child {
    border-right: 1px solid #eee;
}
td:last-child {
    color: #5688a7;
    text-align: right;
}
tr:nth-child(4n+3) td {
    border-bottom-width: 2px;
}
tr:nth-child(4n) td {
    height: 28px;
}
.grid-scroll {
    width: 13px;
    margin-top: 28px;
    padding: 15px 3px 0;
    position: relative;
    background: #f1f1f1;
}
.grid-scroll::before {
    content: "";
    position: absolute;
    top: 4px;
    left: 2px;
    border: 5px solid transparent;
    border-top: none;
    border-bottom: 6px solid #bbb;
}
.grid-scroll span {
    display: block;
    height: 424px;
    border-radius: 4px;
    background: #c1c1c1;
}

.callout {
    position: absolute;
    top: 0;
    left: 0;
    pointer-events: none;
}
```
